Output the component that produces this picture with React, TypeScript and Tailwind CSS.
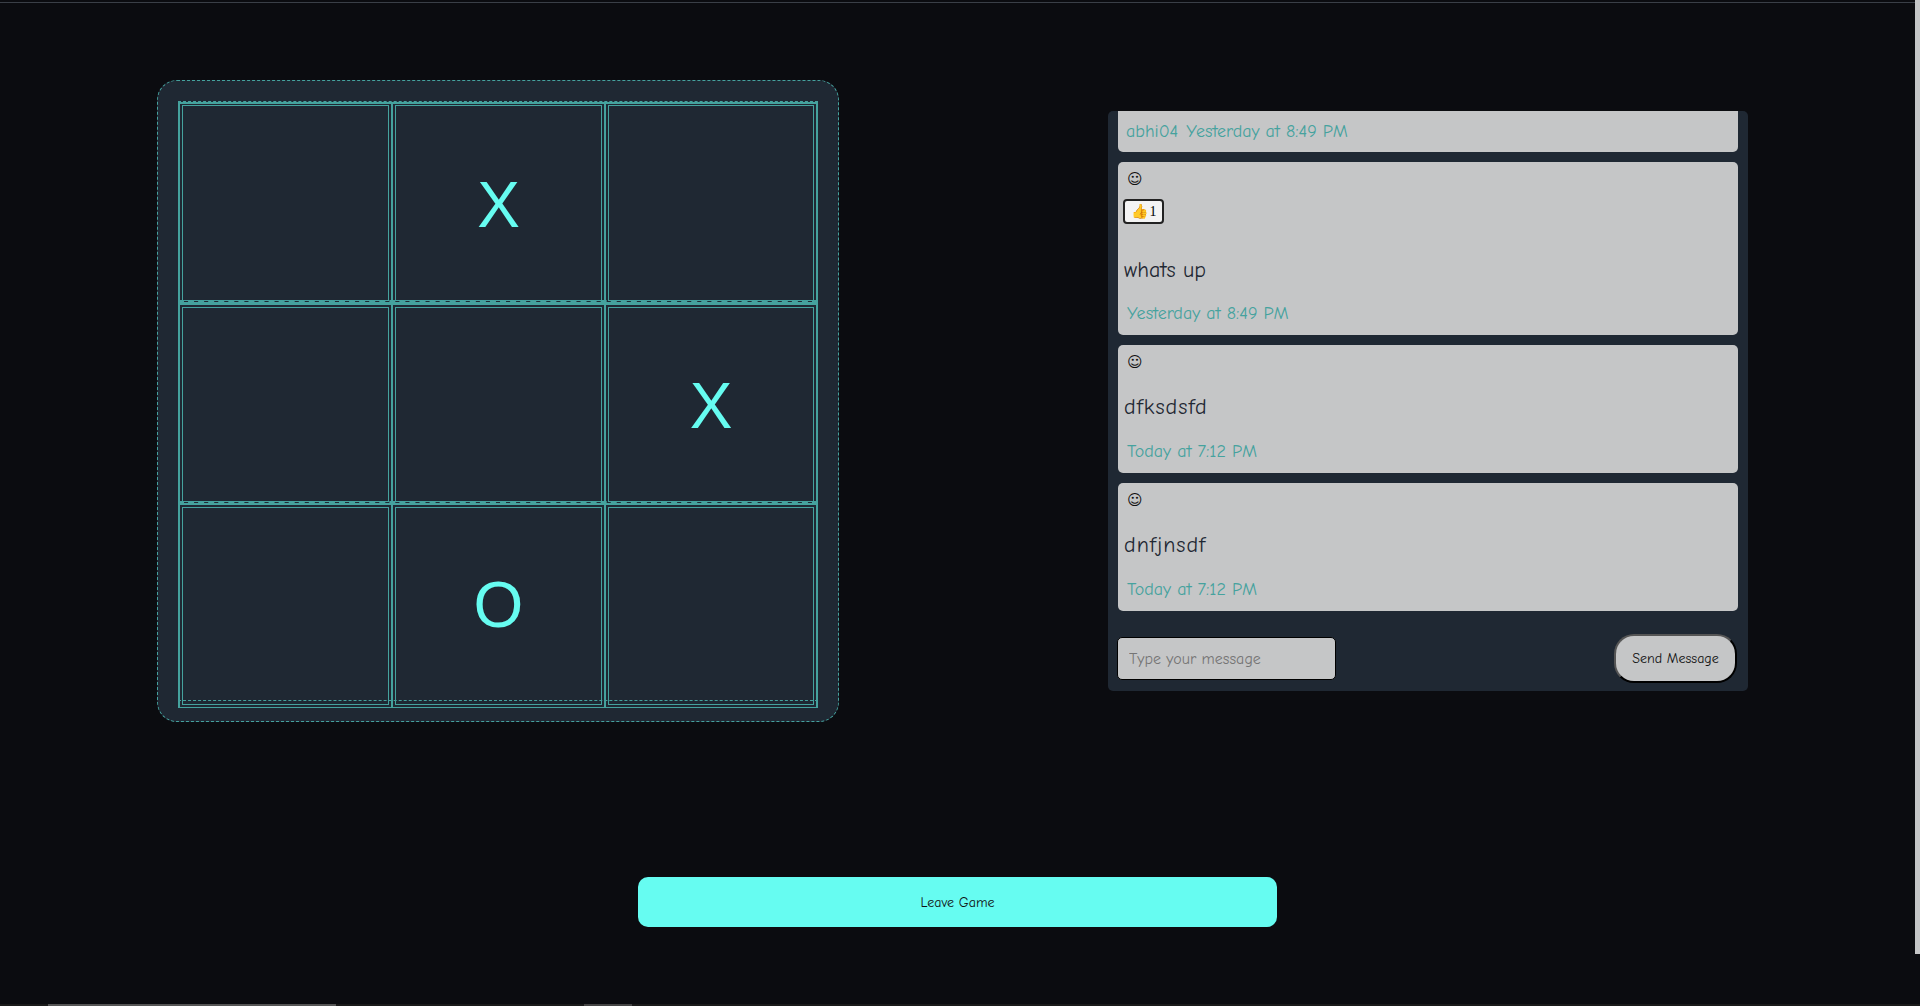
const font = "font-['Comic_Sans_MS','Comic_Neue',Lato,cursive]";

const board = ["", "X", "", "", "", "X", "", "O", ""];

function Cell({ value, index }: { value: string; index: number }) {
  const row = Math.floor(index / 3);
  const lastCol = index % 3 === 2;
  return (
    <div
      className={`border-l-2 border-[#45a29e] pr-[2px] pl-[2px] ${lastCol ? "border-r-2" : ""} ${
        row === 0 ? "border-t-2 pt-[1px] pb-[1px]" : ""
      } ${row === 1 ? "border-t-[3px] pt-[2px] pb-[1px]" : ""} ${
        row === 2 ? "border-t-2 border-b pt-[2px] pb-[2px]" : ""
      }`}
    >
      <div
        className={`flex items-center justify-center border border-[#45a29e] font-['Liberation_Sans',sans-serif] text-[64px] text-[#66fcf1] ${
          row === 0 ? "h-[196px] pt-[3px]" : ""
        } ${row === 1 ? "h-[195px] pt-[3px]" : ""} ${row === 2 ? "h-[198px] pb-[3px]" : ""}`}
      >
        {value}
      </div>
    </div>
  );
}

function Message({
  text,
  time,
  reaction,
}: {
  text: string;
  time: string;
  reaction?: boolean;
}) {
  return (
    <div className="rounded-[5px] bg-[#c5c6c7] pt-[5px] pr-[6px] pb-[9px] pl-[6px]">
      <div className="pl-[3px] font-['DejaVu_Sans',sans-serif] text-[15px] leading-[24px] text-[#111]">☺</div>
      {reaction && (
        <div className="mt-[8px] ml-[-1px] flex h-[25px] w-[41px] items-center justify-center gap-[2px] rounded-[4px] border-2 border-[#222] bg-[#f4f4f4] font-['Liberation_Serif',serif] text-[14px] text-black">
          <span>👍</span>
          <span>1</span>
        </div>
      )}
      <p
        className={`text-[22px] leading-[30px] text-[#1f2833] ${
          reaction ? "mt-[31px]" : "mt-[18px] tracking-[1px]"
        }`}
      >
        {text}
      </p>
      <div className={`pl-[3px] text-[18px] leading-[24px] text-[#45a29e] ${reaction ? "mt-[17px]" : "mt-[18px]"}`}>
        {time}
      </div>
    </div>
  );
}

export default function App() {
  return (
    <div className={`relative h-[1006px] overflow-hidden bg-[#0b0c10] ${font}`}>
      {/* stray capture bits along the window edges */}
      <div className="absolute inset-x-0 top-[2px] h-px bg-[#3a3f47]" />
      <div className="absolute top-0 right-0 h-[954px] w-[5px] bg-[#c5c6c7]" />
      <div className="absolute inset-x-0 bottom-0 h-[2px] bg-[#1a1a1a]" />
      <div className="absolute bottom-0 left-[48px] h-[2px] w-[288px] bg-[#555]" />
      <div className="absolute bottom-0 left-[584px] h-[2px] w-[48px] bg-[#444]" />

      <div className="flex items-start pt-[80px] pl-[157px]">
        <section className="h-[642px] w-[682px] rounded-[20px] border border-dashed border-[#45a29e] bg-[#1f2833] pt-[20px] pl-[20px]">
          <div className="relative w-[640px] pt-[1px]">
            <div className="grid grid-cols-[213px_213px_214px]">
              {board.map((v, i) => (
                <Cell key={i} value={v} index={i} />
              ))}
            </div>
            {/* dashed table outline sits over the cell borders */}
            <div className="pointer-events-none absolute top-0 left-0 h-[600px] w-[640px] border border-dashed border-[#45a29e]" />
            <div className="pointer-events-none absolute top-[199px] left-0 w-[640px] border-t-2 border-dashed border-[#45a29e]" />
            <div className="pointer-events-none absolute top-[400px] left-0 w-[640px] border-t-2 border-dashed border-[#45a29e]" />
          </div>
        </section>

        <section className="mt-[31px] ml-[269px] flex h-[580px] w-[640px] flex-col rounded-[5px] bg-[#1f2833] px-[10px] pb-[8px]">
          <div className="flex flex-col gap-[10px]">
            <div className="flex h-[41px] items-center gap-[8px] rounded-b-[5px] bg-[#c5c6c7] pl-[8px] text-[18px] text-[#45a29e]">
              <span>abhi04</span>
              <span>Yesterday at 8:49 PM</span>
            </div>
            <Message text="whats up" time="Yesterday at 8:49 PM" reaction />
            <Message text="dfksdsfd" time="Today at 7:12 PM" />
            <Message text="dnfjnsdf" time="Today at 7:12 PM" />
          </div>
          <div className="mt-auto flex items-center justify-between">
            <input
              placeholder="Type your message"
              className="ml-[-1px] h-[43px] w-[219px] rounded-[5px] border border-black bg-[#c5c6c7] px-[11px] text-[16px] text-[#1f2833] placeholder:text-[#757575]"
            />
            <button className="mr-[1px] h-[49px] w-[123px] rounded-[20px] border-2 border-t-[#555] border-r-black border-b-black border-l-[#555] bg-[#c5c6c7] text-[14px] text-[#111]">
              Send Message
            </button>
          </div>
        </section>
      </div>

      <div className="mt-[155px] flex justify-center">
        <button className="ml-[-5px] h-[50px] w-[639px] rounded-[10px] bg-[#66fcf1] text-[14px] text-[#111]">
          Leave Game
        </button>
      </div>
    </div>
  );
}
